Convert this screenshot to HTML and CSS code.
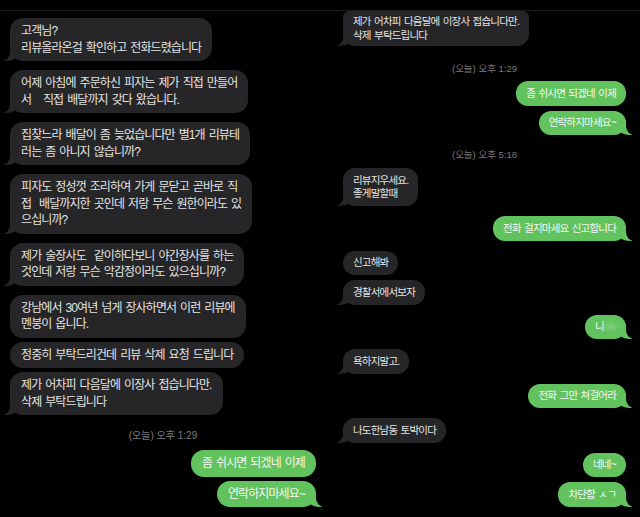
FILE: index.html
```html
<!DOCTYPE html>
<html lang="ko">
<head>
<meta charset="UTF-8">
<meta name="viewport" content="width=device-width, initial-scale=1.0">
<title>문자 대화</title>
<link rel="stylesheet" href="styles.css">
</head>
<body>

<div class="topbar"></div>

<div class="columns">
    <!-- 왼쪽 캡처 -->
    <div class="chat chat-left">
        <div class="msg in tail">고객님?<br>리뷰올라온걸 확인하고 전화드렸습니다</div>
        <div class="msg in tail">어제 아침에 주문하신 피자는 제가 직접 만들어<br>서 &nbsp;&nbsp;직접 배달까지 갖다 왔습니다.</div>
        <div class="msg in tail">집찾느라 배달이 좀 늦었습니다만 별1개 리뷰테<br>러는 좀 아니지 않습니까?</div>
        <div class="msg in tail">피자도 정성껏 조리하여 가게 문닫고 곧바로 직<br>접 &nbsp;배달까지한 곳인데 저랑 무슨 원한이라도 있<br>으십니까?</div>
        <div class="msg in tail">제가 술장사도 &nbsp;같이하다보니 야간장사를 하는<br>것인데 저랑 무슨 악감정이라도 있으십니까?</div>
        <div class="msg in">강남에서 30여년 넘게 장사하면서 이런 리뷰에<br>멘붕이 옵니다.</div>
        <div class="msg in close">정중히 부탁드리건데 리뷰 삭제 요청 드립니다</div>
        <div class="msg in tail close">제가 어차피 다음달에 이장사 접습니다만.<br>삭제 부탁드립니다</div>

        <div class="stamp stamp-a">(오늘) 오후 1:29</div>

        <div class="msg out">좀 쉬시면 되겠네 이제</div>
        <div class="msg out tail close">연락하지마세요~</div>
    </div>

    <!-- 오른쪽 캡처 -->
    <div class="chat chat-right">
        <div class="msg in tail cut">제가 어차피 다음달에 이장사 접습니다만.<br>삭제 부탁드립니다</div>

        <div class="stamp stamp-b">(오늘) 오후 1:29</div>

        <div class="msg out">좀 쉬시면 되겠네 이제</div>
        <div class="msg out tail close">연락하지마세요~</div>

        <div class="stamp stamp-c">(오늘) 오후 5:18</div>

        <div class="msg in tail">리뷰지우세요.<br>좋게말할때</div>
        <div class="msg out tail">전화 걸지마세요 신고합니다</div>
        <div class="msg in">신고해봐</div>
        <div class="msg in tail close">경찰서에서보자</div>
        <div class="msg out tail">니<span class="blur">○○</span></div>
        <div class="msg in tail">욕하지말고.</div>
        <div class="msg out tail">전화 그만 쳐걸어라</div>
        <div class="msg in tail">나도한남동 토박이다</div>
        <div class="msg out">네네~</div>
        <div class="msg out tail close">차단함 ㅅㄱ</div>
    </div>
</div>

</body>
</html>
```

FILE: styles.css
```css
body {
    margin: 0;
    background-color: #000;
    font-family: "Liberation Sans", "Noto Sans CJK KR", sans-serif;
    overflow: hidden;
}
.topbar {
    height: 10px;
    border-bottom: 1px solid #1d1d1d;
}
.columns {
    display: flex;
}
.chat {
    display: flex;
    flex-direction: column;
    box-sizing: border-box;
}
.chat-left {
    width: 325px;
    padding: 7px 9px 0 10px;
    font-size: 12px;
    line-height: 16.5px;
    letter-spacing: -0.9px;
    word-spacing: 1.5px;
}
.chat-right {
    flex: 1;
    padding: 0 14px 0 18px;
    font-size: 10.5px;
    line-height: 13.5px;
    letter-spacing: -0.8px;
    word-spacing: 1.2px;
}

/* 말풍선 */
.msg {
    position: relative;
    z-index: 0;
    border-radius: 13px;
    white-space: nowrap;
}
.chat-left .msg {
    padding: 5px 11px 5px 11px;
    margin-top: 9px;
}
.chat-right .msg {
    padding: 5.5px 10px;
    margin-top: 10px;
    border-radius: 12px;
}
.chat .msg:first-child {
    margin-top: 0;
}
.chat .msg.close {
    margin-top: 4px;
}
.chat-right .msg.close {
    margin-top: 5px;
}
.chat-right .msg.cut {
    padding-top: 4px;
    padding-bottom: 4px;
    border-top-left-radius: 6px;
    border-top-right-radius: 6px;
}
.in {
    align-self: flex-start;
    background-color: #262628;
    color: #e3e3e3;
}
.out {
    align-self: flex-end;
    background-color: #62c35e;
    color: #f6f6f6;
}

/* 꼬리 */
.tail::before,
.tail::after {
    content: "";
    position: absolute;
    z-index: -1;
    bottom: 0;
}
.in.tail::before {
    left: -6px;
    width: 16px;
    height: 15px;
    background-color: #262628;
    border-bottom-right-radius: 14px 11px;
}
.in.tail::after {
    left: -9px;
    width: 9px;
    height: 16px;
    background-color: #000;
    border-bottom-right-radius: 8px 9px;
}
.out.tail::before {
    right: -6px;
    width: 16px;
    height: 15px;
    background-color: #62c35e;
    border-bottom-left-radius: 14px 11px;
}
.out.tail::after {
    right: -9px;
    width: 9px;
    height: 16px;
    background-color: #000;
    border-bottom-left-radius: 8px 9px;
}

.blur {
    display: inline-block;
    filter: blur(2.5px);
    color: #e8ffe8;
    margin-left: 1px;
}

/* 시간 표시 */
.stamp {
    align-self: center;
    color: #7b7b7d;
    font-size: 9.5px;
    line-height: 14px;
    letter-spacing: 0;
    word-spacing: 0;
}
.chat-left .stamp {
    font-size: 10px;
}
.stamp-a {
    margin: 14px 0 7px;
}
.stamp-b {
    margin: 16px 0 5px;
}
.stamp-c {
    margin: 13px 0 6px;
}
.stamp + .msg {
    margin-top: 0 !important;
}
```
